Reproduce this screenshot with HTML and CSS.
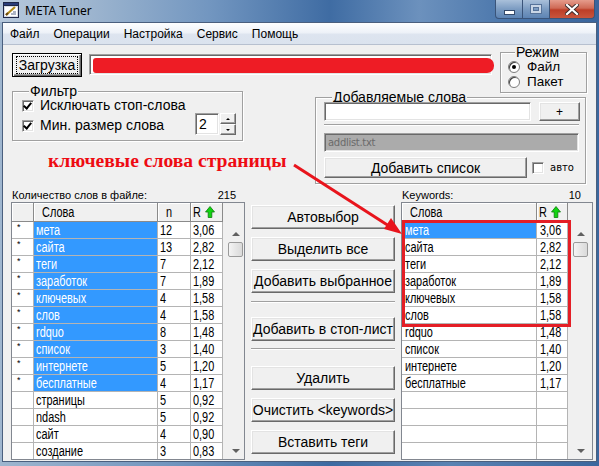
FILE: index.html
```html
<!DOCTYPE html>
<html lang="ru">
<head>
<meta charset="utf-8">
<title>META Tuner</title>
<link rel="stylesheet" href="styles.css">
</head>
<body>
<div class="titlebar">
  <svg class="app-icon" width="16" height="16" viewBox="0 0 16 16">
    <rect x="0.5" y="0.5" width="15" height="15" fill="#d8dde6" stroke="#1d2748"/>
    <rect x="0.5" y="0.5" width="15" height="3" fill="#2a3d7a" stroke="#1d2748"/>
    <rect x="2" y="5" width="12" height="9" fill="#ffffff"/>
    <path d="M3 13 L12 5" stroke="#b08a1a" stroke-width="2.2"/>
    <path d="M3 13 L5 11" stroke="#6a4a10" stroke-width="2.2"/>
    <path d="M8 12 h5 M10 10 h3" stroke="#5a6a8a" stroke-width="1"/>
  </svg>
  <div class="title">META Tuner</div>
  <div class="controls">
    <div class="ctl ctl-min"><span class="min-glyph"></span></div>
    <div class="ctl ctl-max"><span class="max-glyph"></span></div>
    <div class="ctl ctl-close">
      <svg width="14" height="11" viewBox="0 0 14 11"><path d="M2 1 L12 10 M12 1 L2 10" stroke="#3b2a2a" stroke-width="4" stroke-linecap="square"/><path d="M2 1 L12 10 M12 1 L2 10" stroke="#ffffff" stroke-width="2.2" stroke-linecap="square"/></svg>
    </div>
  </div>
</div>

<div class="client">
  <div class="menubar">
    <span class="menu-item">Файл</span>
    <span class="menu-item">Операции</span>
    <span class="menu-item">Настройка</span>
    <span class="menu-item">Сервис</span>
    <span class="menu-item">Помощь</span>
  </div>

  <div class="content">
    <div class="top">
      <div class="toolbar">
        <button class="btn btn-default"><span class="focus">Загрузка</span></button>
        <div class="edit path-edit"><div class="scribble"></div></div>
      </div>

      <div class="group mode">
        <div class="legend">Режим</div>
        <div class="radio-row"><span class="radio checked"></span>Файл</div>
        <div class="radio-row"><span class="radio"></span>Пакет</div>
      </div>

      <div class="left-top">
        <div class="group filter">
          <div class="legend">Фильтр</div>
          <div class="check-row"><span class="check on"></span>Исключать стоп-слова</div>
          <div class="check-row row2">
            <span class="check on"></span><span class="lbl">Мин. размер слова</span>
            <div class="spin">
              <div class="edit spin-edit">2</div>
              <div class="spin-btns">
                <div class="spin-btn"><span class="tri-up"></span></div>
                <div class="spin-btn"><span class="tri-down"></span></div>
              </div>
            </div>
          </div>
        </div>
        <div class="note">ключевые слова страницы</div>
      </div>

      <div class="group addwords">
        <div class="legend">Добавляемые слова</div>
        <div class="aw-row">
          <div class="edit aw-edit"></div>
          <button class="btn plus">+</button>
        </div>
        <div class="sep aw-sep"></div>
        <div class="edit disabled">addlist.txt</div>
        <div class="aw-row2">
          <button class="btn addlist">Добавить список</button>
          <span class="check small"></span><span class="auto">авто</span>
        </div>
      </div>
    </div>

    <div class="bottom">
      <div class="panel left-panel">
        <div class="label-row"><span>Количество слов в файле:</span><span>215</span></div>
        <div class="grid-box">
          <div class="table t-left">
            <div class="hc"></div><div class="hc pl"><span>Слова</span></div><div class="hc pl"><span>n</span></div><div class="hc r-head"><span>R</span><svg class="up-arrow" width="10" height="12" viewBox="0 0 10 12"><path d="M5 0.5 L9.5 6 H6.8 V11.5 H3.2 V6 H0.5 Z" fill="#11d411" stroke="#0a7a0a" stroke-width="0.8"/></svg></div>

            <div class="c ind">*</div><div class="c sel"><span>мета</span></div><div class="c"><span>12</span></div><div class="c"><span>3,06</span></div>
            <div class="c ind">*</div><div class="c sel"><span>сайта</span></div><div class="c"><span>13</span></div><div class="c"><span>2,82</span></div>
            <div class="c ind">*</div><div class="c sel"><span>теги</span></div><div class="c"><span>7</span></div><div class="c"><span>2,12</span></div>
            <div class="c ind">*</div><div class="c sel"><span>заработок</span></div><div class="c"><span>7</span></div><div class="c"><span>1,89</span></div>
            <div class="c ind">*</div><div class="c sel"><span>ключевых</span></div><div class="c"><span>4</span></div><div class="c"><span>1,58</span></div>
            <div class="c ind">*</div><div class="c sel"><span>слов</span></div><div class="c"><span>4</span></div><div class="c"><span>1,58</span></div>
            <div class="c ind">*</div><div class="c sel"><span>rdquo</span></div><div class="c"><span>8</span></div><div class="c"><span>1,48</span></div>
            <div class="c ind">*</div><div class="c sel"><span>список</span></div><div class="c"><span>3</span></div><div class="c"><span>1,40</span></div>
            <div class="c ind">*</div><div class="c sel"><span>интернете</span></div><div class="c"><span>5</span></div><div class="c"><span>1,20</span></div>
            <div class="c ind">*</div><div class="c sel"><span>бесплатные</span></div><div class="c"><span>4</span></div><div class="c"><span>1,17</span></div>
            <div class="c ind"></div><div class="c"><span>страницы</span></div><div class="c"><span>5</span></div><div class="c"><span>0,92</span></div>
            <div class="c ind"></div><div class="c"><span>ndash</span></div><div class="c"><span>5</span></div><div class="c"><span>0,92</span></div>
            <div class="c ind"></div><div class="c"><span>сайт</span></div><div class="c"><span>4</span></div><div class="c"><span>0,90</span></div>
            <div class="c ind"></div><div class="c"><span>создание</span></div><div class="c"><span>3</span></div><div class="c"><span>0,83</span></div>
          </div>
          <div class="sb">
            <div class="sb-btn"><span class="sb-up"></span></div>
            <div class="sb-thumb"></div>
            <div class="sb-track"></div>
            <div class="sb-btn"><span class="sb-down"></span></div>
          </div>
        </div>
      </div>

      <div class="mid">
        <button class="btn mbtn">Автовыбор</button>
        <button class="btn mbtn">Выделить все</button>
        <button class="btn mbtn">Добавить выбранное</button>
        <div class="sep msep1"></div>
        <button class="btn mbtn">Добавить в стоп-лист</button>
        <div class="sep msep2"></div>
        <button class="btn mbtn">Удалить</button>
        <button class="btn mbtn">Очистить &lt;keywords&gt;</button>
        <button class="btn mbtn">Вставить теги</button>
      </div>

      <div class="panel right-panel">
        <div class="label-row"><span>Keywords:</span><span>10</span></div>
        <div class="grid-box">
          <div class="table t-right">
            <div class="hc pl"><span>Слова</span></div><div class="hc r-head"><span>R</span><svg class="up-arrow" width="10" height="12" viewBox="0 0 10 12"><path d="M5 0.5 L9.5 6 H6.8 V11.5 H3.2 V6 H0.5 Z" fill="#11d411" stroke="#0a7a0a" stroke-width="0.8"/></svg></div>
            <div class="c sel"><span>мета</span></div><div class="c"><span>3,06</span></div>
            <div class="c"><span>сайта</span></div><div class="c"><span>2,82</span></div>
            <div class="c"><span>теги</span></div><div class="c"><span>2,12</span></div>
            <div class="c"><span>заработок</span></div><div class="c"><span>1,89</span></div>
            <div class="c"><span>ключевых</span></div><div class="c"><span>1,58</span></div>
            <div class="c"><span>слов</span></div><div class="c"><span>1,58</span></div>
            <div class="c"><span>rdquo</span></div><div class="c"><span>1,48</span></div>
            <div class="c"><span>список</span></div><div class="c"><span>1,40</span></div>
            <div class="c"><span>интернете</span></div><div class="c"><span>1,20</span></div>
            <div class="c"><span>бесплатные</span></div><div class="c"><span>1,17</span></div>
            <div class="c"></div><div class="c"></div>
            <div class="c"></div><div class="c"></div>
            <div class="c"></div><div class="c"></div>
            <div class="c"></div><div class="c"></div>
          </div>
          <div class="sb">
            <div class="sb-btn"><span class="sb-up"></span></div>
            <div class="sb-thumb"></div>
            <div class="sb-track"></div>
            <div class="sb-btn"><span class="sb-down"></span></div>
          </div>
        </div>
      </div>
    </div>
  </div>
</div>

<div class="hl-rect"></div>
<svg class="annot-arrow" width="599" height="466" viewBox="0 0 599 466">
  <path d="M294 165 L389 226" stroke="#e8141c" stroke-width="3"/>
  <polygon points="402,234 384,229 391,218" fill="#e8141c"/>
</svg>
</body>
</html>
```

FILE: styles.css
```css
* { box-sizing: border-box; }

body {
  margin: 0;
  width: 599px;
  height: 466px;
  overflow: hidden;
  position: relative;
  font-family: "Liberation Sans", Arial, sans-serif;
  font-size: 14px;
  color: #000;
  background: linear-gradient(90deg, #9fb6cf 0%, #6f93bd 30%, #3d6aa1 55%, #5a82b2 75%, #3b679e 100%);
}

/* ---------- title bar ---------- */
.titlebar {
  height: 22px;
  display: flex;
  align-items: flex-start;
  background: linear-gradient(90deg, #b6c8dc 0%, #9db5cf 15%, #7296c0 35%, #3f6ca3 55%, #6c91bd 70%, #4a76ab 85%, #3a659c 100%);
}
.app-icon { margin: 2px 0 0 3px; flex: none; }
.title {
  margin: 4px 0 0 6px;
  font-family: "Noto Sans", "Liberation Sans", sans-serif;
  font-size: 12px;
  line-height: 14px;
  color: #000;
}
.controls { margin-left: auto; margin-right: 4px; display: flex; }
.ctl {
  height: 19px;
  display: flex;
  align-items: center;
  justify-content: center;
  border: 1px solid #3a5479;
  border-top: none;
}
.ctl-min {
  width: 28px;
  border-radius: 0 0 0 4px;
  background: linear-gradient(#a9c0da, #7c9cc2 50%, #5d84b4);
}
.ctl-max {
  width: 27px;
  border-left: none;
  background: linear-gradient(#a9c0da, #7c9cc2 50%, #5d84b4);
}
.ctl-close {
  width: 45px;
  border-left: none;
  border-radius: 0 0 4px 0;
  background: linear-gradient(#e59c8c, #cf6a56 45%, #bd3e28 55%, #c9553d);
}
.min-glyph {
  width: 9px; height: 3px;
  margin-top: 6px;
  background: #fff;
  box-shadow: 0 0 0 1px #34496a;
}
.max-glyph {
  width: 10px; height: 8px;
  border: 2px solid #c9d6e6;
  box-shadow: 0 0 0 1px #56739a, inset 0 0 0 1px #56739a;
}

/* ---------- client ---------- */
.client {
  margin: 0 2px;
  height: 440px;
  border: 1px solid #4a5f7e;
  background: #f0f0f0;
  display: flex;
  flex-direction: column;
}
.menubar {
  height: 22px;
  flex: none;
  border-bottom: 1px solid #b7c0cf;
  background: linear-gradient(#fdfeff 0%, #eef2f8 45%, #dde4ef 55%, #dbe3ee 100%);
  display: flex;
  align-items: center;
  font-family: "Liberation Sans", Arial, sans-serif;
  font-size: 12px;
}
.menu-item { padding: 0 7px; line-height: 16px; }

.content { flex: 1; }

/* ---------- common controls ---------- */
.btn {
  font-family: "Liberation Sans", Arial, sans-serif;
  font-size: 14px;
  color: #000;
  background: #f0f0f0;
  border: 1px solid;
  border-color: #ffffff #696969 #696969 #ffffff;
  box-shadow: inset -1px -1px 0 #a0a0a0, inset 1px 1px 0 #e3e3e3;
  padding: 0;
  margin: 0;
  display: flex;
  align-items: center;
  justify-content: center;
  white-space: nowrap;
}
.btn-default {
  width: 71px;
  height: 24px;
  border: 1px solid #000;
  box-shadow: inset 1px 1px 0 #fff, inset -1px -1px 0 #696969, inset -2px -2px 0 #a0a0a0;
}
.focus {
  border: 1px dotted #000;
  padding: 0 2px 0 2px;
  line-height: 16px;
}
.edit {
  background: #fff;
  border: 1px solid;
  border-color: #a0a0a0 #ffffff #ffffff #a0a0a0;
  box-shadow: inset 1px 1px 0 #696969, inset -1px -1px 0 #e3e3e3;
}
.sep {
  height: 2px;
  border-top: 1px solid #a0a0a0;
  border-bottom: 1px solid #ffffff;
}

.group {
  border: 1px solid #a0a0a0;
  box-shadow: 1px 1px 0 #fff, inset 1px 1px 0 #fff;
}
.legend {
  width: fit-content;
  height: 14px;
  margin: -8px 0 0 7px;
  padding: 0 1px;
  background: #f0f0f0;
  line-height: 14px;
  font-size: 14px;
}

.check {
  display: inline-block;
  width: 12px;
  height: 12px;
  flex: none;
  background: #fff;
  border: 1px solid;
  border-color: #a0a0a0 #fff #fff #a0a0a0;
  box-shadow: inset 1px 1px 0 #696969, inset -1px -1px 0 #e3e3e3;
  position: relative;
}
.check.on::after {
  content: "";
  position: absolute;
  left: 2px; top: 0px;
  width: 3px; height: 6px;
  border: solid #000;
  border-width: 0 2px 2px 0;
  transform: rotate(40deg);
}

.radio {
  display: inline-block;
  width: 12px;
  height: 12px;
  border-radius: 50%;
  background: #fff;
  border: 1px solid #7d7d7d;
  box-shadow: inset 1px 1px 0 #404040;
  position: relative;
  flex: none;
}
.radio.checked::after {
  content: "";
  position: absolute;
  left: 3px; top: 3px;
  width: 4px; height: 4px;
  border-radius: 50%;
  background: #000;
}

/* ---------- top area ---------- */
.top {
  margin-left: 8px;
  display: grid;
  grid-template-columns: 234px 70px 177px 8px 87px;
  grid-template-rows: 46px 6px 88px;
}
.toolbar {
  grid-column: 1 / 4;
  grid-row: 1;
  display: flex;
  align-items: flex-start;
  padding: 8px 0 0 1px;
}
.path-edit {
  margin: 1px 0 0 7px;
  width: 403px;
  height: 21px;
  padding: 3px 0 0 3px;
}
.scribble {
  width: 401px;
  height: 15px;
  background: #ee1c25;
  border-radius: 3px 7px 7px 3px;
}

.mode {
  grid-column: 5;
  grid-row: 1 / 3;
  margin-top: 7px;
  height: 41px;
  padding-left: 7px;
}
.radio-row {
  display: flex;
  align-items: center;
  gap: 7px;
  height: 15px;
  line-height: 15px;
  font-size: 13.5px;
}
.mode .radio-row:first-of-type { margin-top: 2px; }

.left-top {
  grid-column: 1;
  grid-row: 2 / 4;
  display: flex;
  flex-direction: column;
}
.filter {
  margin-left: 1px;
  width: 231px;
  height: 50px;
  padding-left: 9px;
}
.check-row {
  display: flex;
  align-items: center;
  gap: 6px;
  height: 15px;
  line-height: 15px;
}
.filter .check-row:first-of-type { margin-top: 6px; }
.row2 { height: 22px; margin-top: 0; }
.row2 .lbl { padding-top: 3px; }
.row2 .check { margin-top: 3px; }
.spin { display: flex; margin-left: auto; margin-right: 6px; }
.spin-edit {
  width: 24px;
  height: 22px;
  padding: 3px 0 0 3px;
  line-height: 15px;
}
.spin-btns { margin-left: 1px; display: flex; flex-direction: column; }
.spin-btn {
  width: 16px;
  height: 11px;
  background: #f0f0f0;
  border: 1px solid;
  border-color: #fff #696969 #696969 #fff;
  box-shadow: inset -1px -1px 0 #a0a0a0;
  display: flex;
  align-items: center;
  justify-content: center;
}
.tri-up, .tri-down {
  width: 0; height: 0;
  border-left: 2px solid transparent;
  border-right: 2px solid transparent;
}
.tri-up { border-bottom: 2px solid #000; }
.tri-down { border-top: 2px solid #000; }

.note {
  margin: 9px 0 0 37px;
  white-space: nowrap;
  font-family: "Liberation Serif", "Times New Roman", serif;
  font-weight: bold;
  font-size: 19.6px;
  line-height: 22px;
  color: #ee0b12;
}

.addwords {
  grid-column: 3 / 6;
  grid-row: 3;
  width: 271px;
  height: 87px;
  padding: 0 0 0 8px;
}
.addwords .legend { margin-left: 8px; }
.aw-row { display: flex; margin-top: -2px; }
.aw-edit { width: 207px; height: 19px; }
.plus { width: 41px; height: 19px; margin-left: 8px; font-size: 12px; }
.aw-sep { width: 255px; margin-top: 3px; }
.disabled {
  margin-top: 7px;
  width: 255px;
  height: 19px;
  background: #ababab;
  color: #6a6a6a;
  font-family: "DejaVu Sans", sans-serif;
  font-size: 10px;
  letter-spacing: -0.3px;
  padding: 2px 0 0 3px;
  line-height: 14px;
}
.aw-row2 { display: flex; align-items: center; margin-top: 5px; }
.addlist { width: 203px; height: 21px; }
.check.small { margin-left: 5px; width: 12px; height: 12px; }
.auto {
  margin-left: 6px;
  font-family: "DejaVu Sans", sans-serif;
  font-size: 10px;
}

/* ---------- bottom area ---------- */
.bottom {
  margin-left: 8px;
  display: flex;
  height: 275px;
}
.panel { display: flex; flex-direction: column; }
.left-panel { width: 234px; }
.right-panel { width: 192px; margin-left: 6px; }
.label-row {
  height: 17px;
  display: flex;
  justify-content: space-between;
  align-items: flex-end;
  font-size: 11px;
  line-height: 14px;
  padding: 0 9px 0 1px;
}
.right-panel .label-row { padding: 0 12px 0 1px; }

.grid-box {
  height: 258px;
  border: 1px solid #828790;
  background: #f0f0f0;
  display: flex;
  overflow: hidden;
}
.table {
  display: grid;
  grid-template-rows: 19px;
  grid-auto-rows: 17px;
  align-content: start;
  flex: none;
}
.t-left { grid-template-columns: 22px 124px 33px 32px; }
.t-right { grid-template-columns: 135px 31px; }

.hc {
  background: #f0f0f0;
  border-right: 1px solid #8a8a8a;
  border-bottom: 1px solid #8a8a8a;
  box-shadow: inset 1px 1px 0 #fff;
  font-size: 14px;
  line-height: 18px;
  padding-left: 2px;
  display: flex;
  align-items: center;
  white-space: nowrap;
}
.hc.pl { padding-left: 8px; }
.hc span, .c span {
  display: inline-block;
  transform: scaleX(0.78);
  transform-origin: 0 50%;
}
.r-head { gap: 2px; }
.up-arrow { margin-top: -1px; flex: none; }

.c {
  background: #fff;
  border-right: 1px solid #b4b4b4;
  border-bottom: 1px solid #b4b4b4;
  font-size: 14px;
  line-height: 16px;
  padding-left: 2px;
  white-space: nowrap;
  overflow: hidden;
}
.c.sel { background: #3399ff; color: #fff; }
.c.ind {
  font-size: 9px;
  line-height: 10px;
  padding-left: 5px;
}
.t-right .c { padding-left: 3px; }

.sb {
  width: 17px;
  margin: 22px 0 0 4px;
  display: flex;
  flex-direction: column;
}
.sb-btn {
  height: 17px;
  flex: none;
  display: flex;
  align-items: center;
  justify-content: center;
}
.sb-up, .sb-down {
  width: 0; height: 0;
  border-left: 4px solid transparent;
  border-right: 4px solid transparent;
}
.sb-up { border-bottom: 4px solid #606060; }
.sb-down { border-top: 4px solid #606060; }
.sb-thumb {
  height: 15px;
  margin: 0 1px;
  flex: none;
  border: 1px solid #9a9a9a;
  border-radius: 2px;
  background: linear-gradient(90deg, #f4f4f4, #e6e6e6 50%, #dadada);
}
.sb-track { flex: 1; }

.mid {
  width: 144px;
  margin-left: 6px;
  padding-top: 20px;
  display: flex;
  flex-direction: column;
}
.mbtn { height: 24px; width: 144px; flex: none; margin-bottom: 8px; }
.msep1 { margin: 0 0 14px; }
.msep2 { margin: -1px 0 16px; }

/* ---------- annotations ---------- */
.hl-rect {
  position: absolute;
  left: 402px;
  top: 220px;
  width: 169px;
  height: 107px;
  border: 3px solid #e41e26;
}
.annot-arrow {
  position: absolute;
  left: 0;
  top: 0;
  pointer-events: none;
}
```
